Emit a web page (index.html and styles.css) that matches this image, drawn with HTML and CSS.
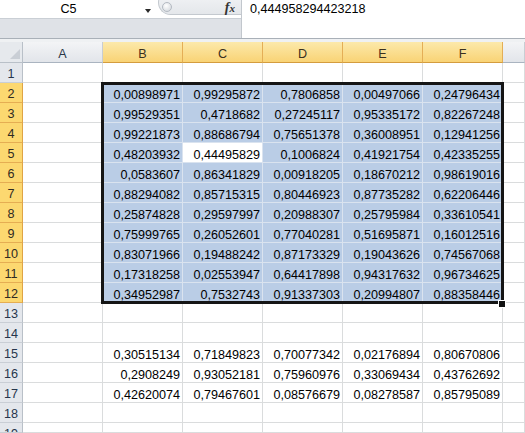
FILE: index.html
```html
<!DOCTYPE html>
<html>
<head>
<meta charset="utf-8">
<link rel="stylesheet" href="styles.css">
</head>
<body>
<div class="fbar">
  <div class="fleft">
    <div class="ftop">
      <div class="namebox">C5</div>
      <div class="dd"><span class="tri"></span></div>
      <div class="pill"><span class="knob"></span><span class="fx"><i>f</i><i class="fxx">x</i></span></div>
    </div>
    <div class="fbottom"></div>
  </div>
  <div class="finput">0,444958294423218</div>
</div>
<div class="gap"></div>
<div class="sheet">
  <div class="corner"><svg width="12" height="12" viewBox="0 0 12 12"><polygon points="11,1 11,11 1,11" fill="#c9ced5"/></svg></div>
  <div class="ch">A</div><div class="ch sel">B</div><div class="ch sel">C</div><div class="ch sel">D</div><div class="ch sel">E</div><div class="ch sel">F</div><div class="ch"></div>

  <div class="rh">1</div><div class="c"></div><div class="c"></div><div class="c"></div><div class="c"></div><div class="c"></div><div class="c"></div><div class="c"></div>

  <div class="rh sel">2</div><div class="c"></div><div class="c s">0,00898971</div><div class="c s">0,99295872</div><div class="c s">0,7806858</div><div class="c s">0,00497066</div><div class="c s">0,24796434</div><div class="c"></div>
  <div class="rh sel">3</div><div class="c"></div><div class="c s">0,99529351</div><div class="c s">0,4718682</div><div class="c s">0,27245117</div><div class="c s">0,95335172</div><div class="c s">0,82267248</div><div class="c"></div>
  <div class="rh sel">4</div><div class="c"></div><div class="c s">0,99221873</div><div class="c s">0,88686794</div><div class="c s">0,75651378</div><div class="c s">0,36008951</div><div class="c s">0,12941256</div><div class="c"></div>
  <div class="rh sel">5</div><div class="c"></div><div class="c s">0,48203932</div><div class="c act">0,44495829</div><div class="c s">0,1006824</div><div class="c s">0,41921754</div><div class="c s">0,42335255</div><div class="c"></div>
  <div class="rh sel">6</div><div class="c"></div><div class="c s">0,0583607</div><div class="c s">0,86341829</div><div class="c s">0,00918205</div><div class="c s">0,18670212</div><div class="c s">0,98619016</div><div class="c"></div>
  <div class="rh sel">7</div><div class="c"></div><div class="c s">0,88294082</div><div class="c s">0,85715315</div><div class="c s">0,80446923</div><div class="c s">0,87735282</div><div class="c s">0,62206446</div><div class="c"></div>
  <div class="rh sel">8</div><div class="c"></div><div class="c s">0,25874828</div><div class="c s">0,29597997</div><div class="c s">0,20988307</div><div class="c s">0,25795984</div><div class="c s">0,33610541</div><div class="c"></div>
  <div class="rh sel">9</div><div class="c"></div><div class="c s">0,75999765</div><div class="c s">0,26052601</div><div class="c s">0,77040281</div><div class="c s">0,51695871</div><div class="c s">0,16012516</div><div class="c"></div>
  <div class="rh sel">10</div><div class="c"></div><div class="c s">0,83071966</div><div class="c s">0,19488242</div><div class="c s">0,87173329</div><div class="c s">0,19043626</div><div class="c s">0,74567068</div><div class="c"></div>
  <div class="rh sel">11</div><div class="c"></div><div class="c s">0,17318258</div><div class="c s">0,02553947</div><div class="c s">0,64417898</div><div class="c s">0,94317632</div><div class="c s">0,96734625</div><div class="c"></div>
  <div class="rh sel">12</div><div class="c"></div><div class="c s">0,34952987</div><div class="c s">0,7532743</div><div class="c s">0,91337303</div><div class="c s">0,20994807</div><div class="c s">0,88358446</div><div class="c"></div>

  <div class="rh">13</div><div class="c"></div><div class="c"></div><div class="c"></div><div class="c"></div><div class="c"></div><div class="c"></div><div class="c"></div>
  <div class="rh">14</div><div class="c"></div><div class="c"></div><div class="c"></div><div class="c"></div><div class="c"></div><div class="c"></div><div class="c"></div>
  <div class="rh">15</div><div class="c"></div><div class="c">0,30515134</div><div class="c">0,71849823</div><div class="c">0,70077342</div><div class="c">0,02176894</div><div class="c">0,80670806</div><div class="c"></div>
  <div class="rh">16</div><div class="c"></div><div class="c">0,2908249</div><div class="c">0,93052181</div><div class="c">0,75960976</div><div class="c">0,33069434</div><div class="c">0,43762692</div><div class="c"></div>
  <div class="rh">17</div><div class="c"></div><div class="c">0,42620074</div><div class="c">0,79467601</div><div class="c">0,08576679</div><div class="c">0,08278587</div><div class="c">0,85795089</div><div class="c"></div>
  <div class="rh">18</div><div class="c"></div><div class="c"></div><div class="c"></div><div class="c"></div><div class="c"></div><div class="c"></div><div class="c"></div>
  <div class="rh">19</div><div class="c"></div><div class="c"></div><div class="c"></div><div class="c"></div><div class="c"></div><div class="c"></div><div class="c"></div>

  <div class="selbox"></div>
  <div class="handle"></div>
</div>
</body>
</html>
```
FILE: styles.css
```css
html, body {
  margin: 0;
  padding: 0;
}
body {
  width: 525px;
  height: 433px;
  overflow: hidden;
  background: #ffffff;
  font-family: "Liberation Sans", Arial, sans-serif;
  font-size: 12.6px;
  color: #000;
}

/* formula bar */
.fbar {
  display: flex;
  height: 38px;
  border-bottom: 1px solid #a9b0b8;
}
.fleft {
  width: 241px;
  display: flex;
  flex-direction: column;
  border-right: 1px solid #c2c7cd;
}
.ftop {
  height: 18px;
  display: flex;
  background: #fff;
  overflow: hidden;
}
.namebox {
  width: 137px;
  text-align: center;
  line-height: 18px;
}
.dd {
  width: 21px;
  display: flex;
  justify-content: center;
  padding-top: 9px;
  box-sizing: border-box;
}
.tri {
  width: 0;
  height: 0;
  border-left: 3.5px solid transparent;
  border-right: 3.5px solid transparent;
  border-top: 4px solid #2a2a2a;
}
.pill {
  flex: 1;
  height: 25px;
  margin-top: -10px;
  border: 1px solid #c4c9cf;
  border-right: none;
  border-radius: 13px 0 0 13px;
  background: linear-gradient(#f4f5f7, #e4e7eb);
  display: flex;
  align-items: flex-start;
  padding-top: 11px;
  box-sizing: border-box;
}
.knob {
  width: 10px;
  height: 10px;
  margin-left: 3px;
  border-radius: 50%;
  border: 1px solid #b4bac2;
  background: radial-gradient(circle at 40% 35%, #ffffff, #cfd3d9);
  box-sizing: border-box;
}
.fx {
  margin-left: auto;
  margin-right: 6px;
  margin-top: 0px;
  font-family: "Liberation Serif", "Times New Roman", serif;
  font-size: 14px;
  line-height: 12px;
  color: #333;
  font-weight: bold;
}
.fx i { font-style: italic; }
.fx .fxx { font-size: 11px; }
.fbottom {
  flex: 1;
  background: #dfe2e7;
  border-top: 1px solid #cacfd5;
}
.finput {
  flex: 1;
  padding-left: 8px;
  line-height: 18px;
}
.gap {
  height: 3px;
  background: #eff1f3;
}

/* sheet */
.sheet {
  position: relative;
  display: grid;
  grid-template-columns: 23px repeat(6, 80px) 1fr;
  grid-template-rows: 21px repeat(18, 20px) 10px;
  width: 525px;
  height: 391px;
  overflow: hidden;
}
.sheet > div {
  box-sizing: border-box;
  white-space: nowrap;
  overflow: hidden;
}
.corner {
  background: #e6e9ed;
  border-right: 1px solid #b9c0c8;
  border-bottom: 1px solid #b9c0c8;
  display: flex;
  align-items: flex-end;
  justify-content: flex-end;
  padding: 0 1px 2px 0;
}
.corner svg { display: block; }
.ch {
  text-align: center;
  padding-top: 5px;
  line-height: 14px;
  background: linear-gradient(#f3f4f6, #e2e5ea);
  border-right: 1px solid #c8cdd3;
  border-bottom: 1px solid #aab4c0;
  color: #2a3648;
}
.ch.sel {
  background: linear-gradient(#fce9ab, #f9d375);
  border-right-color: #e4ae56;
  border-bottom-color: #d49c3e;
  color: #3a3020;
}
.rh {
  text-align: center;
  padding-top: 4px;
  line-height: 14px;
  background: #e4e7ec;
  border-right: 1px solid #b9c0c8;
  border-bottom: 1px solid #c9ced5;
  color: #26364c;
}
.rh.sel {
  background: #fcd870;
  border-right-color: #dfa445;
  border-bottom-color: #e5ad52;
  color: #2f2a22;
}
.c {
  text-align: right;
  padding: 5px 2px 0 0;
  line-height: 14px;
  border-right: 1px solid #dadcdd;
  border-bottom: 1px solid #dadcdd;
  background: #fff;
}
.c.s {
  background: #bacde6;
  border-right-color: #dae3ef;
  border-bottom-color: #dae3ef;
}
.c.act {
  background: #fff;
  border-right-color: #dae3ef;
  border-bottom-color: #dae3ef;
}

/* selection overlay */
.selbox {
  position: absolute;
  left: 101px;
  top: 40px;
  width: 403px;
  height: 222px;
  border: 3px solid #151515;
  pointer-events: none;
}
.handle {
  position: absolute;
  left: 498px;
  top: 258px;
  width: 8px;
  height: 8px;
  background: #111;
  border: 1px solid #fff;
}
```
